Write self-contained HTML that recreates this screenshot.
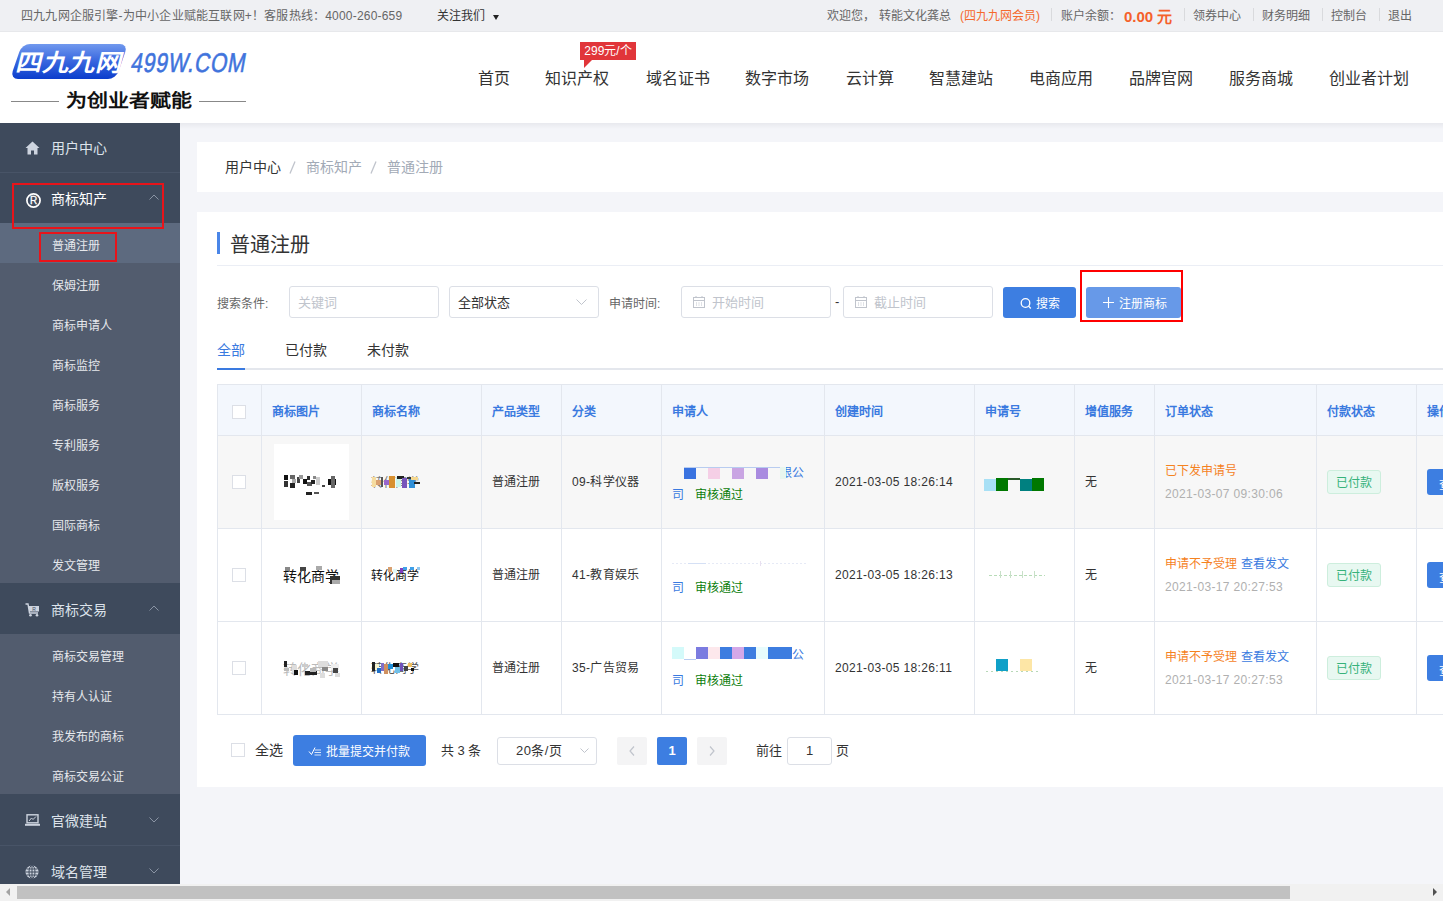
<!DOCTYPE html>
<html lang="zh-CN"><head><meta charset="utf-8">
<style>
*{margin:0;padding:0;box-sizing:border-box}
body{width:1443px;height:901px;overflow:hidden;font-family:"Liberation Sans",sans-serif;background:#f4f5f9;position:relative;color:#333}
.a{position:absolute;white-space:nowrap}
#top{position:absolute;left:0;top:0;width:1443px;height:32px;background:#eff0f3;border-bottom:1px solid #e7e8eb}
#hdr{position:absolute;left:0;top:32px;width:1443px;height:91px;background:#fff}
#shadow{position:absolute;left:180px;top:123px;width:1263px;height:6px;background:linear-gradient(#e8e9ee,#f4f5f9)}
.nav{position:absolute;top:65px;font-size:16px;color:#333}
#side{position:absolute;left:0;top:123px;width:180px;height:778px;background:#3e4a5c}
.sub{position:absolute;left:0;width:180px;background:#525c6e}
.mi{position:absolute;left:51px;font-size:14px;color:#dde3eb}
.si{position:absolute;left:52px;font-size:12px;color:#e6e8ec}
.sep{position:absolute;left:0;width:180px;height:1px;background:#485467}
.card{position:absolute;left:197px;width:1246px;background:#fff}
.lbl{position:absolute;font-size:12px;color:#666}
.inp{position:absolute;top:286px;height:32px;border:1px solid #dcdfe6;border-radius:3px;background:#fff}
.ph{position:absolute;white-space:nowrap;font-size:13px;color:#c0c4cc;top:5px}
.btn{position:absolute;border-radius:3px;color:#fff;font-size:12px}
.th{position:absolute;white-space:nowrap;top:402px;font-size:12px;color:#3a7ae0;font-weight:bold}
.td{position:absolute;white-space:nowrap;font-size:12px;color:#333}
.vl{position:absolute;top:384px;width:1px;height:331px;background:#e3e7ee}
.hl{position:absolute;left:217px;width:1226px;height:1px;background:#e3e7ee}
.cb{position:absolute;width:14px;height:14px;border:1px solid #dcdfe6;border-radius:0;background:#fff}
</style></head><body>
<!-- top bar -->
<div id="top"></div>
<div class="a" style="left:21px;top:6px;font-size:12px;color:#666;letter-spacing:0.2px">四九九网企服引擎-为中小企业赋能互联网+！客服热线：4000-260-659</div>
<div class="a" style="left:437px;top:6px;font-size:12px;color:#333">关注我们</div>
<div class="a" style="left:493px;top:15px;width:0;height:0;border-left:3.5px solid transparent;border-right:3.5px solid transparent;border-top:5px solid #222"></div>

<!-- header -->
<div id="hdr"></div>
<div id="shadow"></div>

<!-- top right -->
<div class="a" style="left:827px;top:6px;font-size:12px;color:#666">欢迎您，</div>
<div class="a" style="left:879px;top:6px;font-size:12px;color:#666">转能文化龚总</div>
<div class="a" style="left:960px;top:6px;font-size:12px;color:#f5692c">(四九九网会员)</div>
<div class="a" style="left:1051px;top:8px;width:1px;height:13px;background:#d9dadd"></div>
<div class="a" style="left:1061px;top:6px;font-size:12px;color:#666">账户余额：</div>
<div class="a" style="left:1124px;top:5px;font-size:15px;color:#f5602a;font-weight:bold">0.00 元</div>
<div class="a" style="left:1184px;top:8px;width:1px;height:13px;background:#d9dadd"></div>
<div class="a" style="left:1193px;top:6px;font-size:12px;color:#666">领券中心</div>
<div class="a" style="left:1253px;top:8px;width:1px;height:13px;background:#d9dadd"></div>
<div class="a" style="left:1262px;top:6px;font-size:12px;color:#666">财务明细</div>
<div class="a" style="left:1322px;top:8px;width:1px;height:13px;background:#d9dadd"></div>
<div class="a" style="left:1331px;top:6px;font-size:12px;color:#666">控制台</div>
<div class="a" style="left:1379px;top:8px;width:1px;height:13px;background:#d9dadd"></div>
<div class="a" style="left:1388px;top:6px;font-size:12px;color:#666">退出</div>

<!-- logo -->
<div class="a" style="left:16px;top:44px;width:106px;height:35px;border-radius:8px;transform:skewX(-19deg);background:linear-gradient(#7199ee,#3c6ae0 45%,#0b3dcc)"></div>
<div class="a" style="left:21px;top:49px;font-size:26px;line-height:30px;font-weight:900;color:#fff;transform:skewX(-14deg) scaleY(0.92);transform-origin:0 0;letter-spacing:0.5px">四九九网</div>
<div class="a" style="left:129px;top:48px;font-size:27px;line-height:30px;font-weight:normal;-webkit-text-stroke:0.6px #3f73dc;color:#3f73dc;transform:skewX(-10deg) scaleX(0.78);transform-origin:0 100%;letter-spacing:1px">499W.COM</div>
<div class="a" style="left:11px;top:101px;width:48px;height:1px;background:#888"></div>
<div class="a" style="left:199px;top:101px;width:47px;height:1px;background:#888"></div>
<div class="a" style="left:66px;top:91px;font-size:21px;line-height:24px;font-weight:900;color:#111;transform:scaleY(0.85);transform-origin:0 0">为创业者赋能</div>

<!-- nav -->
<div class="nav" style="left:478px">首页</div>
<div class="nav" style="left:545px">知识产权</div>
<div class="nav" style="left:646px">域名证书</div>
<div class="nav" style="left:745px">数字市场</div>
<div class="nav" style="left:846px">云计算</div>
<div class="nav" style="left:929px">智慧建站</div>
<div class="nav" style="left:1029px">电商应用</div>
<div class="nav" style="left:1129px">品牌官网</div>
<div class="nav" style="left:1229px">服务商城</div>
<div class="nav" style="left:1329px">创业者计划</div>
<div class="a" style="left:580px;top:42px;width:56px;height:18px;background:#e1353a;color:#fff;font-size:12px;line-height:18px;text-align:center">299元/个</div>
<div class="a" style="left:584px;top:60px;width:0;height:0;border-top:8px solid #e1353a;border-right:8px solid transparent"></div>


<!-- sidebar -->
<div id="side"></div>

<div class="sep" style="top:172px"></div>
<!-- home icon -->
<svg class="a" style="left:25px;top:141px" width="15" height="14" viewBox="0 0 15 14"><path d="M7.5 0.5 L0.5 7 L2.5 7 L2.5 13.5 L6 13.5 L6 9.5 L9 9.5 L9 13.5 L12.5 13.5 L12.5 7 L14.5 7 Z" fill="#cdd4df"/></svg>
<div class="mi" style="top:137px">用户中心</div>
<!-- R icon -->
<svg class="a" style="left:26px;top:193px" width="15" height="15" viewBox="0 0 15 15"><circle cx="7.5" cy="7.5" r="6.6" fill="none" stroke="#fff" stroke-width="1.7"/><text x="7.6" y="11.2" font-size="10" fill="#fff" stroke="#fff" stroke-width="0.3" text-anchor="middle" font-family="Liberation Sans">R</text></svg>
<div class="mi" style="top:188px;font-weight:500;color:#fff">商标知产</div>
<svg class="a" style="left:149px;top:194px" width="10" height="6" viewBox="0 0 10 6"><path d="M0.5 5.5 L5 1 L9.5 5.5" fill="none" stroke="#8a94a4" stroke-width="1"/></svg>
<div class="sub" style="top:223px;height:360px"></div>
<div class="a" style="left:0;top:223px;width:180px;height:40px;background:#5d6a7f"></div>
<div class="si" style="top:236px">普通注册</div>
<div class="si" style="top:276px">保姆注册</div>
<div class="si" style="top:316px">商标申请人</div>
<div class="si" style="top:356px">商标监控</div>
<div class="si" style="top:396px">商标服务</div>
<div class="si" style="top:436px">专利服务</div>
<div class="si" style="top:476px">版权服务</div>
<div class="si" style="top:516px">国际商标</div>
<div class="si" style="top:556px">发文管理</div>
<!-- cart icon -->
<svg class="a" style="left:25px;top:603px" width="15" height="14" viewBox="0 0 15 14"><path d="M0.5 1 L3 1 L4.5 10 L13 10" fill="none" stroke="#cdd4df" stroke-width="1.4"/><rect x="4" y="3" width="10" height="5.5" fill="#cdd4df"/><circle cx="5.5" cy="12.3" r="1.3" fill="#cdd4df"/><circle cx="12" cy="12.3" r="1.3" fill="#cdd4df"/><text x="9" y="7.8" font-size="5" fill="#3e4a5c" text-anchor="middle" font-family="Liberation Sans">R</text></svg>
<div class="mi" style="top:599px">商标交易</div>
<svg class="a" style="left:149px;top:605px" width="10" height="6" viewBox="0 0 10 6"><path d="M0.5 5.5 L5 1 L9.5 5.5" fill="none" stroke="#8a94a4" stroke-width="1"/></svg>
<div class="sub" style="top:634px;height:160px"></div>
<div class="si" style="top:647px">商标交易管理</div>
<div class="si" style="top:687px">持有人认证</div>
<div class="si" style="top:727px">我发布的商标</div>
<div class="si" style="top:767px">商标交易公证</div>
<!-- laptop icon -->
<svg class="a" style="left:25px;top:814px" width="15" height="12" viewBox="0 0 15 12"><rect x="2" y="0.8" width="11" height="8" fill="none" stroke="#cdd4df" stroke-width="1.4"/><path d="M4 7 L6.5 4 L8 5.5 L11 2.5" fill="none" stroke="#cdd4df" stroke-width="1"/><rect x="0" y="9.8" width="15" height="2" fill="#cdd4df"/></svg>
<div class="mi" style="top:810px">官微建站</div>
<svg class="a" style="left:149px;top:817px" width="10" height="6" viewBox="0 0 10 6"><path d="M0.5 0.5 L5 5 L9.5 0.5" fill="none" stroke="#8a94a4" stroke-width="1"/></svg>
<div class="sep" style="top:845px"></div>
<!-- globe icon -->
<svg class="a" style="left:25px;top:865px" width="14" height="14" viewBox="0 0 14 14"><circle cx="7" cy="7" r="6.5" fill="#cdd4df"/><path d="M0.5 7 H13.5 M7 0.5 V13.5 M1.5 4 H12.5 M1.5 10 H12.5" stroke="#3e4a5c" stroke-width="1"/><ellipse cx="7" cy="7" rx="3" ry="6.5" fill="none" stroke="#3e4a5c" stroke-width="1"/></svg>
<div class="mi" style="top:861px">域名管理</div>
<svg class="a" style="left:149px;top:868px" width="10" height="6" viewBox="0 0 10 6"><path d="M0.5 0.5 L5 5 L9.5 0.5" fill="none" stroke="#8a94a4" stroke-width="1"/></svg>
<!-- red boxes -->
<div class="a" style="left:12px;top:183px;width:152px;height:46px;border:2px solid #e8141a"></div>
<div class="a" style="left:39px;top:232px;width:78px;height:30px;border:2px solid #e8141a"></div>


<!-- content cards -->
<div class="card" style="top:142px;height:50px"></div>
<div class="card" style="top:212px;height:575px"></div>

<!-- breadcrumb -->
<div class="a" style="left:225px;top:156px;font-size:14px;color:#333">用户中心</div>
<svg class="a" style="left:289px;top:161px" width="7" height="13" viewBox="0 0 7 13"><path d="M6 0.5 L1 12.5" stroke="#c0c4cc" stroke-width="1.3"/></svg>
<div class="a" style="left:306px;top:156px;font-size:14px;color:#a2aab6">商标知产</div>
<svg class="a" style="left:370px;top:161px" width="7" height="13" viewBox="0 0 7 13"><path d="M6 0.5 L1 12.5" stroke="#c0c4cc" stroke-width="1.3"/></svg>
<div class="a" style="left:387px;top:156px;font-size:14px;color:#a2aab6">普通注册</div>
<!-- title -->
<div class="a" style="left:217px;top:232px;width:3px;height:22px;background:#4a86e8"></div>
<div class="a" style="left:230px;top:229px;font-size:20px;color:#333">普通注册</div>
<div class="a" style="left:217px;top:265px;width:1226px;height:1px;background:#ebeef5"></div>
<!-- search row -->
<div class="lbl" style="left:217px;top:294px">搜索条件:</div>
<div class="inp" style="left:289px;width:150px"><span class="ph" style="left:8px">关键词</span></div>
<div class="inp" style="left:449px;width:150px"><span class="ph" style="left:8px;color:#333">全部状态</span>
<svg class="a" style="left:126px;top:12px" width="11" height="7" viewBox="0 0 11 7"><path d="M0.5 0.5 L5.5 5.5 L10.5 0.5" fill="none" stroke="#c0c4cc" stroke-width="1"/></svg></div>
<div class="lbl" style="left:609px;top:294px">申请时间:</div>
<div class="inp" style="left:681px;width:150px">
<svg class="a" style="left:11px;top:9px" width="12" height="12" viewBox="0 0 12 12"><rect x="0.5" y="1.5" width="11" height="10" fill="none" stroke="#c0c4cc"/><path d="M0.5 4.5 H11.5 M3 7 H4 M5.5 7 H6.5 M8 7 H9 M3 9 H4 M5.5 9 H6.5 M8 9 H9 M3 0 V2 M9 0 V2" stroke="#c0c4cc"/></svg>
<span class="ph" style="left:30px">开始时间</span></div>
<div class="a" style="left:835px;top:294px;font-size:13px;color:#333">-</div>
<div class="inp" style="left:843px;width:150px">
<svg class="a" style="left:11px;top:9px" width="12" height="12" viewBox="0 0 12 12"><rect x="0.5" y="1.5" width="11" height="10" fill="none" stroke="#c0c4cc"/><path d="M0.5 4.5 H11.5 M3 7 H4 M5.5 7 H6.5 M8 7 H9 M3 9 H4 M5.5 9 H6.5 M8 9 H9 M3 0 V2 M9 0 V2" stroke="#c0c4cc"/></svg>
<span class="ph" style="left:30px">截止时间</span></div>
<div class="btn" style="left:1003px;top:287px;width:73px;height:31px;background:#3d7ee1">
<svg class="a" style="left:17px;top:11px" width="12" height="11" viewBox="0 0 12 11"><circle cx="5.5" cy="5" r="4.3" fill="none" stroke="#fff" stroke-width="1.3"/><path d="M8.6 8.1 L10.8 10.5" stroke="#fff" stroke-width="1.3"/></svg>
<span class="a" style="left:33px;top:7px;font-weight:500">搜索</span></div>
<div class="btn" style="left:1086px;top:287px;width:95px;height:31px;background:#6799e8">
<svg class="a" style="left:17px;top:10px" width="11" height="11" viewBox="0 0 11 11"><path d="M5.5 0 V11 M0 5.5 H11" stroke="#fff" stroke-width="1.1"/></svg>
<span class="a" style="left:33px;top:7px;font-weight:500">注册商标</span></div>
<div class="a" style="left:1080px;top:270px;width:103px;height:52px;border:2px solid #f00"></div>
<!-- tabs -->
<div class="a" style="left:217px;top:339px;font-size:14px;color:#3a7ae0">全部</div>
<div class="a" style="left:285px;top:339px;font-size:14px;color:#333">已付款</div>
<div class="a" style="left:367px;top:339px;font-size:14px;color:#333">未付款</div>
<div class="a" style="left:217px;top:368px;width:1226px;height:2px;background:#e4e7ed"></div>
<div class="a" style="left:217px;top:368px;width:28px;height:2px;background:#3a7ae0"></div>


<div class="a" style="left:217px;top:384px;width:1226px;height:51px;background:#f3f7fd"></div>
<div class="a" style="left:217px;top:435px;width:1226px;height:93px;background:#f7f7f7"></div>
<div class="hl" style="top:384px"></div>
<div class="hl" style="top:435px"></div>
<div class="hl" style="top:528px"></div>
<div class="hl" style="top:621px"></div>
<div class="hl" style="top:714px"></div>
<div class="vl" style="left:217px"></div>
<div class="vl" style="left:261px"></div>
<div class="vl" style="left:361px"></div>
<div class="vl" style="left:481px"></div>
<div class="vl" style="left:561px"></div>
<div class="vl" style="left:661px"></div>
<div class="vl" style="left:824px"></div>
<div class="vl" style="left:974px"></div>
<div class="vl" style="left:1074px"></div>
<div class="vl" style="left:1154px"></div>
<div class="vl" style="left:1316px"></div>
<div class="vl" style="left:1416px"></div>
<div class="th" style="left:272px">商标图片</div>
<div class="th" style="left:372px">商标名称</div>
<div class="th" style="left:492px">产品类型</div>
<div class="th" style="left:572px">分类</div>
<div class="th" style="left:672px">申请人</div>
<div class="th" style="left:835px">创建时间</div>
<div class="th" style="left:985px">申请号</div>
<div class="th" style="left:1085px">增值服务</div>
<div class="th" style="left:1165px">订单状态</div>
<div class="th" style="left:1327px">付款状态</div>
<div class="th" style="left:1427px">操作</div>
<div class="cb" style="left:232px;top:405px"></div>
<div class="cb" style="left:232px;top:475px"></div>
<div class="td" style="left:492px;top:472px">普通注册</div>
<div class="td" style="left:572px;top:472px;letter-spacing:0.3px">09-科学仪器</div>
<div class="td" style="left:835px;top:475px;letter-spacing:0.35px">2021-03-05 18:26:14</div>
<div class="td" style="left:1085px;top:472px">无</div>
<div class="td" style="left:672px;top:485px;color:#3a7ae0">司</div>
<div class="td" style="left:695px;top:485px;color:#0b7d0b">审核通过</div>
<div class="td" style="left:1165px;top:461px;color:#f5821f">已下发申请号</div>
<div class="td" style="left:1165px;top:487px;color:#b0b0b0;letter-spacing:0.35px">2021-03-07 09:30:06</div>
<div class="a" style="left:1327px;top:470px;width:54px;height:24px;background:#e8f8f1;border:1px solid #cdeedd;border-radius:3px;color:#36b27a;font-size:12px;line-height:24px;text-align:center">已付款</div>
<div class="a" style="left:1427px;top:469px;width:30px;height:26px;background:#3d7ee1;border-radius:3px;overflow:hidden"><span class="a" style="left:12px;top:6px;font-size:12px;color:#fff">查看</span></div>
<div class="cb" style="left:232px;top:568px"></div>
<div class="td" style="left:492px;top:565px">普通注册</div>
<div class="td" style="left:572px;top:565px;letter-spacing:0.3px">41-教育娱乐</div>
<div class="td" style="left:835px;top:568px;letter-spacing:0.35px">2021-03-05 18:26:13</div>
<div class="td" style="left:1085px;top:565px">无</div>
<div class="td" style="left:672px;top:578px;color:#3a7ae0">司</div>
<div class="td" style="left:695px;top:578px;color:#0b7d0b">审核通过</div>
<div class="td" style="left:1165px;top:554px;color:#f5821f">申请不予受理</div>
<div class="td" style="left:1241px;top:554px;color:#3a7ae0">查看发文</div>
<div class="td" style="left:1165px;top:580px;color:#b0b0b0;letter-spacing:0.35px">2021-03-17 20:27:53</div>
<div class="a" style="left:1327px;top:563px;width:54px;height:24px;background:#e8f8f1;border:1px solid #cdeedd;border-radius:3px;color:#36b27a;font-size:12px;line-height:24px;text-align:center">已付款</div>
<div class="a" style="left:1427px;top:562px;width:30px;height:26px;background:#3d7ee1;border-radius:3px;overflow:hidden"><span class="a" style="left:12px;top:6px;font-size:12px;color:#fff">查看</span></div>
<div class="cb" style="left:232px;top:661px"></div>
<div class="td" style="left:492px;top:658px">普通注册</div>
<div class="td" style="left:572px;top:658px;letter-spacing:0.3px">35-广告贸易</div>
<div class="td" style="left:835px;top:661px;letter-spacing:0.35px">2021-03-05 18:26:11</div>
<div class="td" style="left:1085px;top:658px">无</div>
<div class="td" style="left:672px;top:671px;color:#3a7ae0">司</div>
<div class="td" style="left:695px;top:671px;color:#0b7d0b">审核通过</div>
<div class="td" style="left:1165px;top:647px;color:#f5821f">申请不予受理</div>
<div class="td" style="left:1241px;top:647px;color:#3a7ae0">查看发文</div>
<div class="td" style="left:1165px;top:673px;color:#b0b0b0;letter-spacing:0.35px">2021-03-17 20:27:53</div>
<div class="a" style="left:1327px;top:656px;width:54px;height:24px;background:#e8f8f1;border:1px solid #cdeedd;border-radius:3px;color:#36b27a;font-size:12px;line-height:24px;text-align:center">已付款</div>
<div class="a" style="left:1427px;top:655px;width:30px;height:26px;background:#3d7ee1;border-radius:3px;overflow:hidden"><span class="a" style="left:12px;top:6px;font-size:12px;color:#fff">查看</span></div>
<div class="a" style="left:274px;top:444px;width:75px;height:76px;background:#fff"></div>

<!-- mosaic -->
<div class="a" style="left:283px;top:658px;font-size:14px;color:#bbb">转化商学</div>
<div class="a" style="left:371px;top:659px;font-size:12px;color:#555">转化商学</div>
<div class="a" style="left:371px;top:473px;font-size:12px;color:#777">转化商学</div>
<div class="a" style="left:684px;top:467px;width:12px;height:12px;background:#3a73e0"></div>
<div class="a" style="left:708px;top:467px;width:12px;height:12px;background:#f5cfe6"></div>
<div class="a" style="left:732px;top:467px;width:12px;height:12px;background:#c9a5e3"></div>
<div class="a" style="left:756px;top:467px;width:12px;height:12px;background:#a98be0"></div>
<div class="a" style="left:780px;top:467px;width:6px;height:12px;background:#e8f6ee"></div>
<div class="a" style="left:684px;top:467px;width:96px;height:1px;background:#b8ccf0"></div>
<div class="a" style="left:672px;top:563px;width:134px;height:1px;background:repeating-linear-gradient(90deg,#e6eaf6 0 2px,transparent 2px 4px)"></div>
<div class="a" style="left:688px;top:563px;width:18px;height:1px;background:#d5e0f5"></div>
<div class="a" style="left:760px;top:561px;width:1px;height:5px;background:#e8e0f0"></div>
<div class="a" style="left:672px;top:647px;width:12px;height:12px;background:#d4fafa"></div>
<div class="a" style="left:684px;top:659px;width:12px;height:1px;background:#b8ccf0"></div>
<div class="a" style="left:696px;top:647px;width:12px;height:12px;background:#7b7be0"></div>
<div class="a" style="left:708px;top:647px;width:12px;height:12px;background:#fde8ec"></div>
<div class="a" style="left:720px;top:647px;width:12px;height:12px;background:#3d7de0"></div>
<div class="a" style="left:732px;top:647px;width:12px;height:12px;background:#d4a8e8"></div>
<div class="a" style="left:744px;top:647px;width:12px;height:12px;background:#3d7de0"></div>
<div class="a" style="left:756px;top:647px;width:12px;height:12px;background:#e8fcfc"></div>
<div class="a" style="left:768px;top:647px;width:24px;height:12px;background:#3d7de0"></div>
<div class="td" style="left:786px;top:463px;color:#3a7ae0"><span style="display:inline-block;width:6px;overflow:hidden;vertical-align:top"><span style="margin-left:-6px">限</span></span>公</div>
<div class="td" style="left:792px;top:645px;color:#3a7ae0">公</div>
<div class="a" style="left:984px;top:479px;width:12px;height:12px;background:#a8e0f5"></div>
<div class="a" style="left:996px;top:478px;width:12px;height:13px;background:#007800"></div>
<div class="a" style="left:1020px;top:479px;width:12px;height:12px;background:#008080"></div>
<div class="a" style="left:1032px;top:478px;width:12px;height:13px;background:#007800"></div>
<div class="a" style="left:1008px;top:478px;width:12px;height:2px;background:#2a5a2a"></div>
<div class="a" style="left:989px;top:575px;width:56px;height:1px;background:repeating-linear-gradient(90deg,#b8dcb8 0 3px,transparent 3px 5px)"></div>
<div class="a" style="left:1000px;top:571px;width:1px;height:7px;background:#c8e0c8"></div>
<div class="a" style="left:1010px;top:571px;width:1px;height:7px;background:#c8e0c8"></div>
<div class="a" style="left:1022px;top:571px;width:1px;height:7px;background:#c8e0c8"></div>
<div class="a" style="left:1034px;top:571px;width:1px;height:7px;background:#c8e0c8"></div>
<div class="a" style="left:996px;top:659px;width:12px;height:12px;background:#10a0c8"></div>
<div class="a" style="left:1020px;top:659px;width:12px;height:12px;background:#fde6a6"></div>
<div class="a" style="left:986px;top:671px;width:54px;height:1px;background:repeating-linear-gradient(90deg,#b8d8b8 0 2px,transparent 2px 5px)"></div>
<div class="a" style="left:284px;top:475px;width:4px;height:5px;background:#111"></div>
<div class="a" style="left:284px;top:481px;width:4px;height:6px;background:#333"></div>
<div class="a" style="left:290px;top:475px;width:5px;height:4px;background:#666"></div>
<div class="a" style="left:292px;top:479px;width:4px;height:4px;background:#aaa"></div>
<div class="a" style="left:290px;top:483px;width:5px;height:5px;background:#222"></div>
<div class="a" style="left:297px;top:477px;width:3px;height:6px;background:#444"></div>
<div class="a" style="left:299px;top:475px;width:4px;height:4px;background:#999"></div>
<div class="a" style="left:303px;top:479px;width:4px;height:5px;background:#111"></div>
<div class="a" style="left:307px;top:476px;width:3px;height:4px;background:#333"></div>
<div class="a" style="left:307px;top:482px;width:5px;height:4px;background:#555"></div>
<div class="a" style="left:311px;top:480px;width:4px;height:4px;background:#222"></div>
<div class="a" style="left:313px;top:476px;width:3px;height:3px;background:#888"></div>
<div class="a" style="left:316px;top:477px;width:4px;height:8px;background:#ccc"></div>
<div class="a" style="left:322px;top:485px;width:3px;height:2px;background:#444"></div>
<div class="a" style="left:328px;top:479px;width:8px;height:6px;background:#111"></div>
<div class="a" style="left:331px;top:476px;width:4px;height:12px;background:#666"></div>
<div class="a" style="left:306px;top:492px;width:6px;height:3px;background:#222"></div>
<div class="a" style="left:314px;top:492px;width:5px;height:2px;background:#555"></div>
<div class="a" style="left:284px;top:661px;width:3px;height:6px;background:#222"></div>
<div class="a" style="left:284px;top:668px;width:5px;height:3px;background:#bbb"></div>
<div class="a" style="left:292px;top:665px;width:5px;height:8px;background:#ddd"></div>
<div class="a" style="left:294px;top:670px;width:4px;height:5px;background:#111"></div>
<div class="a" style="left:302px;top:664px;width:6px;height:3px;background:#ccc"></div>
<div class="a" style="left:305px;top:671px;width:12px;height:4px;background:#222"></div>
<div class="a" style="left:310px;top:668px;width:6px;height:4px;background:#bbb"></div>
<div class="a" style="left:318px;top:661px;width:10px;height:6px;background:#ddd"></div>
<div class="a" style="left:322px;top:667px;width:6px;height:4px;background:#888"></div>
<div class="a" style="left:320px;top:673px;width:5px;height:5px;background:#ddd"></div>
<div class="a" style="left:331px;top:664px;width:8px;height:6px;background:#eee"></div>
<div class="a" style="left:333px;top:668px;width:5px;height:5px;background:#444"></div>
<div class="a" style="left:335px;top:673px;width:5px;height:4px;background:#ddd"></div>
<div class="a" style="left:283px;top:565px;font-size:14px;font-weight:normal;color:#111;letter-spacing:0px">转化商学</div>
<div class="a" style="left:285px;top:567px;width:5px;height:4px;background:#888"></div>
<div class="a" style="left:300px;top:567px;width:6px;height:4px;background:#444"></div>
<div class="a" style="left:316px;top:566px;width:6px;height:4px;background:#aaa"></div>
<div class="a" style="left:330px;top:576px;width:10px;height:8px;background:#333"></div>
<div class="a" style="left:332px;top:580px;width:8px;height:4px;background:#aaa"></div>
<div class="a" style="left:372px;top:477px;width:4px;height:10px;background:#f5dca0"></div>
<div class="a" style="left:376px;top:480px;width:7px;height:5px;background:#d9a070"></div>
<div class="a" style="left:381px;top:477px;width:2px;height:10px;background:#555"></div>
<div class="a" style="left:384px;top:480px;width:5px;height:5px;background:#9966cc"></div>
<div class="a" style="left:389px;top:476px;width:6px;height:12px;background:#d89030"></div>
<div class="a" style="left:396px;top:477px;width:5px;height:10px;background:#c8f4ec"></div>
<div class="a" style="left:397px;top:476px;width:7px;height:3px;background:#222"></div>
<div class="a" style="left:402px;top:478px;width:5px;height:10px;background:#7755bb"></div>
<div class="a" style="left:407px;top:477px;width:5px;height:2px;background:#333"></div>
<div class="a" style="left:409px;top:479px;width:6px;height:9px;background:#3090d8"></div>
<div class="a" style="left:411px;top:477px;width:7px;height:3px;background:#f5d890"></div>
<div class="a" style="left:414px;top:482px;width:6px;height:2px;background:#222"></div>
<div class="a" style="left:372px;top:662px;width:3px;height:9px;background:#222"></div>
<div class="a" style="left:375px;top:664px;width:4px;height:6px;background:#f8f4d0"></div>
<div class="a" style="left:377px;top:668px;width:4px;height:5px;background:#2070c8"></div>
<div class="a" style="left:381px;top:663px;width:3px;height:8px;background:#8070c8"></div>
<div class="a" style="left:384px;top:664px;width:4px;height:10px;background:#d09060"></div>
<div class="a" style="left:388px;top:664px;width:5px;height:5px;background:#2090d8"></div>
<div class="a" style="left:393px;top:663px;width:6px;height:4px;background:#111"></div>
<div class="a" style="left:395px;top:667px;width:5px;height:6px;background:#70c0e8"></div>
<div class="a" style="left:400px;top:663px;width:3px;height:8px;background:#7050b8"></div>
<div class="a" style="left:404px;top:666px;width:4px;height:5px;background:#444"></div>
<div class="a" style="left:408px;top:663px;width:4px;height:4px;background:#f0c060"></div>
<div class="a" style="left:411px;top:668px;width:3px;height:3px;background:#111"></div>
<div class="a" style="left:371px;top:566px;font-size:12px;font-weight:normal;color:#111">转化商学</div>
<div class="a" style="left:388px;top:567px;width:4px;height:5px;background:#d8a070"></div>
<div class="a" style="left:393px;top:569px;width:4px;height:4px;background:#e0f8f8"></div>
<div class="a" style="left:400px;top:568px;width:3px;height:5px;background:#8040c0"></div>
<div class="a" style="left:403px;top:567px;width:4px;height:3px;background:#40a0e8"></div>
<div class="a" style="left:410px;top:567px;width:4px;height:3px;background:#40a0e8"></div>
<div class="a" style="left:417px;top:567px;width:3px;height:3px;background:#90c8f0"></div>
<!-- pagination -->
<div class="cb" style="left:231px;top:743px"></div>
<div class="a" style="left:255px;top:739px;font-size:14px;color:#333">全选</div>
<div class="btn" style="left:293px;top:735px;width:133px;height:31px;background:#3d7ee1">
<svg class="a" style="left:15px;top:11px" width="14" height="10" viewBox="0 0 14 10"><path d="M1 5.5 L3.5 8.5 L7 1.5" fill="none" stroke="#fff" stroke-width="1"/><path d="M6.5 4 H13 M6.5 6.5 H13 M6.5 9 H13" stroke="#fff" stroke-width="0.8"/></svg>
<span class="a" style="left:33px;top:7px;font-weight:500">批量提交并付款</span></div>
<div class="a" style="left:441px;top:740px;font-size:13px;color:#333">共 3 条</div>
<div class="a" style="left:497px;top:737px;width:100px;height:28px;border:1px solid #dcdfe6;border-radius:3px;background:#fff"></div>
<div class="a" style="left:516px;top:740px;font-size:13px;color:#333;letter-spacing:0.4px">20条/页</div>
<svg class="a" style="left:580px;top:748px" width="9" height="6" viewBox="0 0 9 6"><path d="M0.5 0.5 L4.5 4.5 L8.5 0.5" fill="none" stroke="#c0c4cc" stroke-width="1"/></svg>
<div class="a" style="left:617px;top:737px;width:30px;height:28px;background:#f4f4f5;border-radius:2px"></div>
<svg class="a" style="left:629px;top:746px" width="6" height="10" viewBox="0 0 6 10"><path d="M5 0.5 L1 5 L5 9.5" fill="none" stroke="#c0c4cc" stroke-width="1.2"/></svg>
<div class="a" style="left:657px;top:737px;width:30px;height:28px;background:#3d7ee1;border-radius:2px;color:#fff;font-size:13px;font-weight:bold;line-height:28px;text-align:center">1</div>
<div class="a" style="left:697px;top:737px;width:30px;height:28px;background:#f4f4f5;border-radius:2px"></div>
<svg class="a" style="left:709px;top:746px" width="6" height="10" viewBox="0 0 6 10"><path d="M1 0.5 L5 5 L1 9.5" fill="none" stroke="#c0c4cc" stroke-width="1.2"/></svg>
<div class="a" style="left:756px;top:740px;font-size:13px;color:#333">前往</div>
<div class="a" style="left:787px;top:737px;width:45px;height:28px;border:1px solid #dcdfe6;border-radius:3px;background:#fff;font-size:13px;line-height:26px;text-align:center;color:#333">1</div>
<div class="a" style="left:836px;top:740px;font-size:13px;color:#333">页</div>

<!-- scrollbar -->
<div class="a" style="left:0;top:884px;width:1443px;height:17px;background:#f1f1f1"></div>
<div class="a" style="left:17px;top:886px;width:1273px;height:13px;background:#c1c1c1"></div>
<div class="a" style="left:6px;top:888px;width:0;height:0;border-top:4px solid transparent;border-bottom:4px solid transparent;border-right:4px solid #a3a3a3"></div>
<div class="a" style="left:1433px;top:888px;width:0;height:0;border-top:4px solid transparent;border-bottom:4px solid transparent;border-left:4px solid #505050"></div>
</body></html>
